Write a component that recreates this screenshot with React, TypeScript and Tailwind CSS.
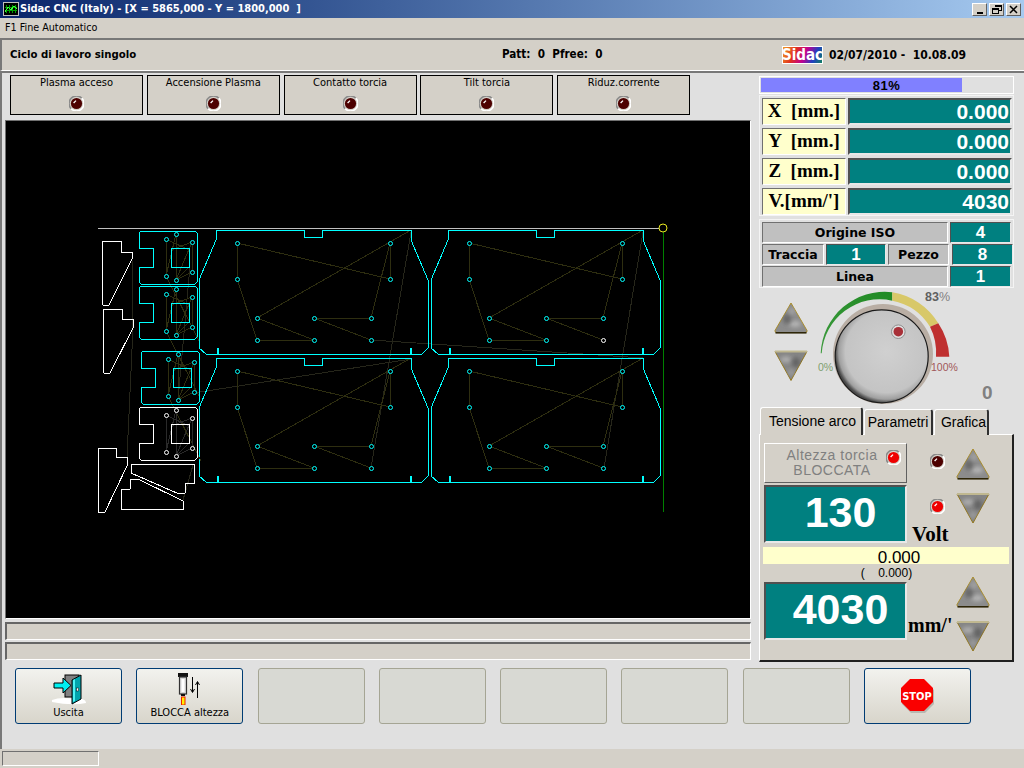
const sunken = "border border-t-[#707070] border-l-[#707070] border-r-white border-b-white";
const raised = "border border-t-white border-l-white border-r-[#606060] border-b-[#606060]";
const strip = "border-2 border-r border-b border-t-[#666666] border-l-[#666666] border-r-white border-b-white";
const valueBox = "border-2 border-t-[#505050] border-l-[#505050] border-r-[#e8e8e8] border-b-[#e8e8e8] bg-[#008080] text-white font-bold";
const uiFont = "font-['DejaVu_Sans_Condensed','Liberation_Sans',sans-serif]";
const arialFont = "font-['Liberation_Sans',Arial,sans-serif]";
const serifFont = "font-['Liberation_Serif','Times_New_Roman',serif]";

const CYAN = "#00ffff";
const TRAVEL = "#2e2e10";

const Led = ({ on = false }: { on?: boolean }) => (
  <svg width="15" height="15" viewBox="0 0 15 15" className="block shrink-0">
    <path d="M2.2 12.8A7.3 7.3 0 0 1 12.8 2.2" fill="none" stroke="#8a8a8a" strokeWidth="1.6" />
    <path d="M12.8 2.2A7.3 7.3 0 0 1 2.2 12.8" fill="none" stroke="#ffffff" strokeWidth="1.6" />
    <circle cx="7.5" cy="7.5" r="5.6" fill={on ? "#ee0000" : "#4d0000"} />
    <path d="M4.6 7 L7 4.6" stroke="#ffffff" strokeWidth="1.3" />
  </svg>
);

// grey mottled triangle with a gold rim
const Arrow = ({ up = false }: { up?: boolean }) => (
  <svg width="34" height="32" viewBox="0 0 34 32" className="block">
    <defs>
      <filter id="arrowBlur" x="-50%" y="-50%" width="200%" height="200%">
        <feGaussianBlur stdDeviation="2" />
      </filter>
      <clipPath id="arrowUpClip">
        <path d="M17 1 L33 28.5 Q33.5 30.5 31 30.5 H3 Q0.5 30.5 1 28.5 Z" />
      </clipPath>
      <clipPath id="arrowDownClip">
        <path d="M1 2 H33 L17 31 Z" />
      </clipPath>
    </defs>
    {up ? (
      <>
        <path d="M17 1 L33 28.5 Q33.5 30.5 31 30.5 H3 Q0.5 30.5 1 28.5 Z" fill="#8c8c8c" stroke="#a8891e" strokeWidth="0.9" strokeLinejoin="round" />
        <g clipPath="url(#arrowUpClip)">
          <ellipse cx="21" cy="22" rx="6" ry="3" fill="#b8b8b8" filter="url(#arrowBlur)" />
          <ellipse cx="13" cy="17" rx="4" ry="5" fill="#666666" filter="url(#arrowBlur)" />
          <ellipse cx="18" cy="9" rx="3" ry="3" fill="#a8a8a8" filter="url(#arrowBlur)" />
        </g>
        <path d="M1.5 30.8 H32.5" stroke="#2e2608" strokeWidth="1.6" />
      </>
    ) : (
      <>
        <path d="M1 2 H33 L17 31 Z" fill="#858585" stroke="#8e700f" strokeWidth="0.9" strokeLinejoin="round" />
        <g clipPath="url(#arrowDownClip)">
          <ellipse cx="12" cy="10" rx="6" ry="3" fill="#b0b0b0" filter="url(#arrowBlur)" />
          <ellipse cx="22" cy="13" rx="4" ry="5" fill="#626262" filter="url(#arrowBlur)" />
          <ellipse cx="17" cy="23" rx="3" ry="3" fill="#a0a0a0" filter="url(#arrowBlur)" />
        </g>
        <path d="M1 2 H33" stroke="#c0b890" strokeWidth="2" />
      </>
    )}
  </svg>
);

const Indicator = ({ label }: { label: string }) => (
  <div className={`w-[133px] h-[40px] border border-black bg-[#d4d0c8] flex flex-col items-center ${uiFont} text-[11px] leading-[14px] text-black`}>
    <span>{label}</span>
    <span className="mt-[6px]">
      <Led />
    </span>
  </div>
);

const AxisRow = ({ label, value }: { label: string; value: string }) => (
  <div className="flex h-[27px] gap-[2px]">
    <div className={`w-[84px] ${sunken} bg-[#ffffcc] ${serifFont} font-bold text-[19px] text-black flex items-center justify-center whitespace-pre`}>
      {label}
    </div>
    <div className={`w-[164px] ${valueBox} ${arialFont} text-[21px] flex items-center justify-end pr-px`}>{value}</div>
  </div>
);

const InfoLabel = ({ text, className }: { text: string; className: string }) => (
  <div className={`${className} ${sunken} bg-[#c0c0c0] font-['DejaVu_Sans',sans-serif] font-bold text-[12.5px] text-black flex items-center justify-center pt-px`}>
    {text}
  </div>
);

const InfoValue = ({ text, className }: { text: string; className: string }) => (
  <div className={`${className} border border-t-[#505050] border-l-[#505050] border-r-[#e8e8e8] border-b-[#e8e8e8] bg-[#008080] text-white font-bold ${arialFont} text-[17px] flex items-center justify-center`}>
    {text}
  </div>
);

const Knob = () => (
  <svg width="255" height="119" viewBox="759 288 255 119" className="block">
    <defs>
      <radialGradient id="knobFace" cx="0.55" cy="0.45" r="0.55">
        <stop offset="0" stopColor="#d0d0d0" />
        <stop offset="0.8" stopColor="#c4c4c4" />
        <stop offset="0.93" stopColor="#a0a0a0" />
        <stop offset="1" stopColor="#4a4a4a" />
      </radialGradient>
      <linearGradient id="knobGreen" x1="0" y1="1" x2="1" y2="0">
        <stop offset="0" stopColor="#3c9a3c" />
        <stop offset="1" stopColor="#1f8a24" />
      </linearGradient>
    </defs>
    <svg x={774} y={302} width="34" height="32" viewBox="0 0 34 32">
      <Arrow up />
    </svg>
    <svg x={774} y={349.5} width="34" height="32" viewBox="0 0 34 32">
      <Arrow />
    </svg>
    <path d="M820.7 353.3A64 64 0 0 1 892.3 292.3V300.7A58 58 0 0 0 821.7 353.3Z" fill="url(#knobGreen)" />
    <path d="M892.3 292.3A66 66 0 0 1 938.3 323.3L930 326.7A57 57 0 0 0 892.3 300.7Z" fill="#d8c868" />
    <path d="M938.3 323.3A66 66 0 0 1 949.3 356.7H936A57 57 0 0 0 930 326.7Z" fill="#bf3030" />
    <circle cx="883" cy="354" r="50" fill="#b9aea4" />
    <circle cx="881.7" cy="356.3" r="46.5" fill="url(#knobFace)" stroke="#1a1a1a" strokeWidth="1.2" />
    <circle cx="898.3" cy="331.7" r="6.8" fill="#e0e0e0" stroke="#909090" />
    <circle cx="898.3" cy="331.7" r="4.8" fill="#a83038" />
    <text x="925" y="301" fontFamily="'Liberation Sans',sans-serif" fontSize="12.5" fontWeight="700" fill="#606060">83<tspan fontWeight="400" fill="#808080">%</tspan></text>
    <text x="818" y="371" fontFamily="'Liberation Sans',sans-serif" fontSize="10.5" fill="#7f9f70">0%</text>
    <text x="931" y="371" fontFamily="'Liberation Sans',sans-serif" fontSize="10.5" fill="#a05858">100%</text>
    <text x="982" y="399" fontFamily="'Liberation Sans',sans-serif" fontSize="19" fontWeight="700" fill="#808080">0</text>
  </svg>
);

const Tab = ({ label, className }: { label: string; className: string }) => (
  <div className={`${className} border-t border-l border-t-white border-l-white border-r-2 border-r-[#303030] rounded-t-[3px] bg-[#d4d0c8] ${arialFont} text-[14px] text-black flex items-center justify-center`}>
    {label}
  </div>
);

const outlineBig =
  "M216 230H304V237H322V230H411V240L428 280V348L422 354H411V348H410V354H218V348H217V354H206L199 348V280L216 240Z";

const bigHoles = [
  [237, 243],
  [237, 279],
  [257, 318],
  [257, 340],
  [314, 340],
  [314, 318],
  [371, 318],
  [371, 340],
  [390, 279],
  [390, 243],
];

const BigPart = ({ dx, dy }: { dx: number; dy: number }) => (
  <g transform={`translate(${dx} ${dy})`}>
    <path d="M411 230L257 318L314 340H257L237 279V243L390 279V243L371 318H314L371 340" fill="none" stroke={TRAVEL} />
    <path d={outlineBig} fill="none" stroke={CYAN} />
    {bigHoles.map(([x, y], i) => (
      <circle
        key={i}
        cx={x + 0.5}
        cy={y + 0.5}
        r="2"
        fill="#000"
        shapeRendering="auto"
        stroke={dx === 232 && dy === 0 && x === 371 && y === 340 ? "#fff" : CYAN}
      />
    ))}
  </g>
);

const SmallPart = ({ x, y, color, travel, last = false }: { x: number; y: number; color: string; travel: string; last?: boolean }) => (
  <g transform={`translate(${x} ${y})`}>
    <path d="M27 8V45L37 3V49L53 11V41L37 49M27 8L50 19M53 11L32 19M50 36L37 49" fill="none" stroke={travel} />
    {!last && <path d="M27 45L60 110" fill="none" stroke={travel} />}
    <path d="M2 0H56L58 2V51L56 53H2L0 51V36H14V17H0V2Z" fill="none" stroke={color} />
    <rect x="32" y="17" width="18" height="19" fill="none" stroke={color} />
    {[
      [27, 8],
      [37, 3],
      [53, 11],
      [53, 41],
      [37, 49],
      [27, 45],
    ].map(([cx, cy], i) => (
      <circle key={i} cx={cx + 0.5} cy={cy + 0.5} r="2" fill="#000" shapeRendering="auto" stroke={color} />
    ))}
  </g>
);

const Drawing = () => (
  <svg width="744" height="497" viewBox="6 121 744 497" className="block" shapeRendering="crispEdges">
    <path d="M132 259L133 328L127 457M411 359L194 393M371 340L643 358M411 232L371 468M643 232L604 468M190 266L178 400M193 465L183 500" fill="none" stroke="#26261a" />
    <BigPart dx={0} dy={0} />
    <BigPart dx={232} dy={0} />
    <BigPart dx={0} dy={128} />
    <BigPart dx={232} dy={128} />
    <SmallPart x={139} y={231} color={CYAN} travel={TRAVEL} />
    <SmallPart x={139} y={286} color={CYAN} travel={TRAVEL} />
    <SmallPart x={141} y={351} color={CYAN} travel={TRAVEL} />
    <SmallPart x={139} y={407} color="#ffffff" travel="#2a2a2a" last />
    <g fill="none" stroke="#ffffff">
      <path d="M102 241H121V252H132V259L109 305H103L102 304V242Z" />
      <path d="M103 309H122V319H133V328L110 373H104L103 372V310Z" />
      <path d="M98 448H116V457H127V466L105 512H98V449Z" />
      <path d="M131 464H194V483H185V493L179 494L131 473Z" />
      <path d="M130 479H138L183 501V509H121V490L130 489Z" />
    </g>
    <path d="M98 228.5H659" stroke="#c0c0c0" />
    <path d="M663.5 232V512" stroke="#008000" />
    <circle cx="663" cy="228" r="4" fill="none" stroke="#e8e820" shapeRendering="auto" />
  </svg>
);

const DoorIcon = () => (
  <svg width="34" height="32" viewBox="0 0 34 32" className="block">
    <path d="M0 27Q5 25 12 25L30 26Q34 27 34 30Q20 33 0 29Z" fill="#fff" />
    <rect x="13" y="2" width="14" height="22" fill="#808080" stroke="#000" />
    <path d="M20 7L29 2V26L20 31Z" fill="#00a4ac" stroke="#000" />
    <path d="M21 7L23 6V28L21 29Z" fill="#4af4f4" />
    <rect x="24.5" y="15" width="2" height="3" fill="#fff" stroke="#000" strokeWidth="0.5" />
    <path d="M2 10H11V5L19 12.5L11 20V15H2Z" fill="#00f0f0" stroke="#000" />
  </svg>
);

const TorchIcon = () => (
  <svg width="24" height="33" viewBox="0 0 24 33" className="block">
    <rect x="0" y="1" width="10" height="4" fill="#111" />
    <rect x="1.5" y="5" width="7" height="17" fill="#d8d8d8" stroke="#333" strokeWidth="1.2" />
    <rect x="3.5" y="7" width="3" height="13" fill="#fff" />
    <rect x="3" y="22" width="4" height="2" fill="#111" />
    <rect x="3.5" y="25" width="3.5" height="8" fill="#ffee00" stroke="#ee2200" strokeWidth="1" />
    <path d="M14.5 5V20M12.5 17L14.5 20.5L16.5 17M19.5 26V10M17.5 13L19.5 9.5L21.5 13" fill="none" stroke="#000" />
  </svg>
);

const StopIcon = () => (
  <svg width="36" height="36" viewBox="0 0 36 36" className="block">
    <path d="M11 3H25L34 12V26L25 35H11L2 26V12Z" fill="#b8b8b0" />
    <path d="M10 1H24L33 10V24L24 33H10L1 24V10Z" fill="#fa0000" />
    <text x="17" y="21.5" textAnchor="middle" fontFamily="'DejaVu Sans Condensed','Liberation Sans',sans-serif" fontSize="11" fontWeight="700" fill="#fff">STOP</text>
  </svg>
);

const ActionButton = ({ icon, label }: { icon?: React.ReactNode; label?: string }) =>
  icon ? (
    <div className={`w-[107px] h-[56px] rounded-[3px] border border-[#003c74] bg-linear-to-b from-[#f2f2ee] to-[#d8d5cb] flex flex-col items-center justify-center ${uiFont} text-[11px] leading-[15px] text-black`}>
      {icon}
      {label && <span>{label}</span>}
    </div>
  ) : (
    <div className="w-[107px] h-[56px] rounded-[3px] border border-[#a5a594] bg-[#d8d9d3]" />
  );

export default function App() {
  return (
    <div className={`w-[1024px] h-[768px] overflow-hidden flex flex-col bg-[#d4d0c8] ${uiFont} text-black`}>
      {/* title bar */}
      <div className="h-[18px] shrink-0 flex items-center bg-linear-to-r from-[#0a246a] to-[#a6caf0] pl-[3px] pr-[3px]">
        <svg width="16" height="14" viewBox="0 0 16 14" className="block" shapeRendering="crispEdges">
          <rect x="0.5" y="0.5" width="15" height="13" fill="#000" stroke="#c0c0c0" />
          <path d="M3 3V11M6 3V11M9 3V11M12 3V11M2 5H14M2 8H14" stroke="#00a000" />
          <path d="M2 10L5 5L8 8L11 4L14 7" fill="none" stroke="#40ff40" />
        </svg>
        <span className="ml-px text-white font-bold text-[11px] whitespace-pre">
          {"Sidac CNC (Italy) - [X = 5865,000 - Y = 1800,000  ]"}
        </span>
        <div className="ml-auto flex gap-[2px]">
          <div className={`w-[15px] h-[13px] ${raised} bg-[#d4d0c8] flex items-end justify-center pb-[1px]`}>
            <div className="w-[6px] h-[2px] bg-black" />
          </div>
          <div className={`w-[15px] h-[13px] ${raised} bg-[#d4d0c8]`}>
            <svg width="13" height="11" viewBox="0 0 13 11" className="block" shapeRendering="crispEdges">
              <path d="M5 1.5H11V6.5H9M5 2.5H11M5 1.5V3" fill="none" stroke="#000" />
              <rect x="2.5" y="4.5" width="6" height="5" fill="none" stroke="#000" />
              <path d="M2.5 5.5H8.5" stroke="#000" />
            </svg>
          </div>
          <div className={`w-[15px] h-[13px] ${raised} bg-[#d4d0c8]`}>
            <svg width="13" height="11" viewBox="0 0 13 11" className="block">
              <path d="M3 2L10 9M10 2L3 9" stroke="#000" strokeWidth="1.5" />
            </svg>
          </div>
        </div>
      </div>

      {/* menu */}
      <div className="h-[20px] shrink-0 flex items-center pl-[5px] text-[10.7px]">F1 Fine Automatico</div>

      {/* header */}
      <div className="h-[33px] shrink-0 flex items-center border-t-2 border-l-2 border-b border-t-[#787878] border-l-[#787878] border-b-white pl-[8px] font-bold text-[11.3px]">
        <span className="w-[492px]">Ciclo di lavoro singolo</span>
        <span className="w-[280px] whitespace-pre text-[11.6px]">{"Patt:  0  Pfree:  0"}</span>
        <div className="w-[41px] h-[18px] overflow-hidden flex items-center justify-center bg-[linear-gradient(115deg,#f0a020_0%,#e03020_30%,#c00090_55%,#2040c0_78%,#108060_100%)] border border-white">
          <span className="font-bold text-[15px] leading-[16px] text-white">Sidac</span>
        </div>
        <span className="ml-[6px] whitespace-pre font-semibold text-[12px]">{"02/07/2010 -  10.08.09"}</span>
      </div>

      {/* main area */}
      <div className="h-[678px] shrink-0 flex flex-col border-t-2 border-l-2 border-t-[#787878] border-l-[#787878] bg-[#e0e0e0]">
        <div className="h-[589px] flex">
          {/* left column */}
          <div className="w-[757px] shrink-0 flex flex-col pt-[2px]">
            <div className="flex gap-[3.8px] ml-[8px]">
              <Indicator label="Plasma acceso" />
              <Indicator label="Accensione Plasma" />
              <Indicator label="Contatto torcia" />
              <Indicator label="Tilt torcia" />
              <Indicator label="Riduz.corrente" />
            </div>
            <div className={`mt-[5px] ml-[3px] w-[746px] h-[499px] ${sunken} bg-black`}>
              <Drawing />
            </div>
            <div className={`mt-[3px] ml-[3px] w-[746px] h-[18px] ${strip} bg-[#d4d0c8]`} />
            <div className={`mt-[2px] ml-[3px] w-[746px] h-[18px] ${strip} bg-[#d4d0c8]`} />
          </div>

          {/* right column */}
          <div className="w-[255px] shrink-0 flex flex-col pt-[3px]">
            <div className="h-[18px] border border-white bg-[#e0e0e0] p-px">
              <div className="h-full relative">
                <div className="w-[201px] h-full bg-[#8080ff]" />
                <span className={`absolute inset-0 flex items-center justify-center ${arialFont} font-bold text-[13px] leading-none tracking-[0.5px]`}>
                  81%
                </span>
              </div>
            </div>

            <div className="mt-px h-[121px] border border-[#f4f4f4] pt-[2px] pl-[2px] flex flex-col gap-[3px]">
              <AxisRow label={"X  [mm.]"} value="0.000" />
              <AxisRow label={"Y  [mm.]"} value="0.000" />
              <AxisRow label={"Z  [mm.]"} value="0.000" />
              <AxisRow label={"V.[mm/']"} value="4030" />
            </div>

            <div className="mt-[3px] h-[69px] border border-[#f4f4f4] pt-[2px] pl-[2px] flex flex-col gap-px">
              <div className="flex gap-[2px] h-[21px]">
                <InfoLabel text="Origine ISO" className="w-[186px]" />
                <InfoValue text="4" className="w-[61px]" />
              </div>
              <div className="flex gap-[2px] h-[21px]">
                <InfoLabel text="Traccia" className="w-[62px]" />
                <InfoValue text="1" className="w-[60px]" />
                <InfoLabel text="Pezzo" className="w-[61px]" />
                <InfoValue text="8" className="w-[61px] ml-px" />
              </div>
              <div className="flex gap-[2px] h-[21px]">
                <InfoLabel text="Linea" className="w-[186px]" />
                <InfoValue text="1" className="w-[61px]" />
              </div>
            </div>

            <Knob />

            <div className="h-[28px] flex items-end gap-px pl-px -mb-px relative z-10">
              <Tab label="Tensione arco" className="w-[103px] h-[28px] pl-[3px]" />
              <Tab label="Parametri" className="w-[69px] h-[26px]" />
              <Tab label="Grafica" className="w-[55px] h-[26px] pl-[5px]" />
            </div>

            <div className="h-[228px] border border-t-white border-l-white border-r-2 border-b-2 border-r-[#202020] border-b-[#202020] bg-[#d4d0c8] pl-[4px] pt-[8px] flex flex-col">
              <div className="flex h-[100px]">
                <div className="w-[143px] flex flex-col">
                  <div className={`h-[40px] ${raised} bg-[#d4d0c8] flex ${arialFont} text-[14px] leading-[15px] text-[#808080] tracking-[0.5px]`}>
                    <div className="w-[121px] pl-[13px] self-center text-center whitespace-nowrap">
                      Altezza torcia
                      <br />
                      BLOCCATA
                    </div>
                    <div className="mt-[6px]">
                      <Led on />
                    </div>
                  </div>
                  <div className={`mt-[2px] h-[58px] ${valueBox} ${arialFont} text-[43px] flex items-center justify-center pl-[10px] pb-[4px]`}>130</div>
                </div>
                <div className="w-[49px] flex flex-col pt-[11px]">
                  <div className="ml-[23px]">
                    <Led />
                  </div>
                  <div className="ml-[23px] mt-[30px]">
                    <Led on />
                  </div>
                  <div className={`ml-[5px] mt-[9px] ${serifFont} font-bold text-[21px] leading-[22px]`}>Volt</div>
                </div>
                <div className="flex flex-col pt-[5px] gap-[12px]">
                  <Arrow up />
                  <Arrow />
                </div>
              </div>

              <div className={`mt-[4px] -ml-px w-[246px] h-[17px] bg-[#ffffcc] ${arialFont} text-[17px] leading-[17px] flex items-center justify-center pl-[26px] pt-[3px]`}>
                0.000
              </div>
              <div className={`h-[18px] w-[245px] flex items-center justify-center whitespace-pre ${arialFont} text-[12px]`}>
                {"(    0.000)"}
              </div>

              <div className="flex">
                <div className={`w-[143px] h-[58px] ${valueBox} ${arialFont} text-[43px] flex items-center justify-center pl-[10px] pb-[4px]`}>4030</div>
                <div className={`w-[48px] ml-px pt-[32px] ${serifFont} font-bold text-[20px] leading-[22px]`}>mm/'</div>
                <div className="flex flex-col -mt-[6px] gap-[12px]">
                  <Arrow up />
                  <Arrow />
                </div>
              </div>
            </div>
          </div>
        </div>

        {/* button row */}
        <div className="mt-[6px] ml-[13px] flex gap-[14.3px]">
          <ActionButton icon={<DoorIcon />} label="Uscita" />
          <ActionButton icon={<TorchIcon />} label="BLOCCA altezza" />
          <ActionButton />
          <ActionButton />
          <ActionButton />
          <ActionButton />
          <ActionButton />
          <ActionButton icon={<StopIcon />} />
        </div>
      </div>

      {/* status bar */}
      <div className="flex-1 pt-[2px] pl-[2px]">
        <div className={`w-[97px] h-[15px] ${sunken}`} />
      </div>
    </div>
  );
}
